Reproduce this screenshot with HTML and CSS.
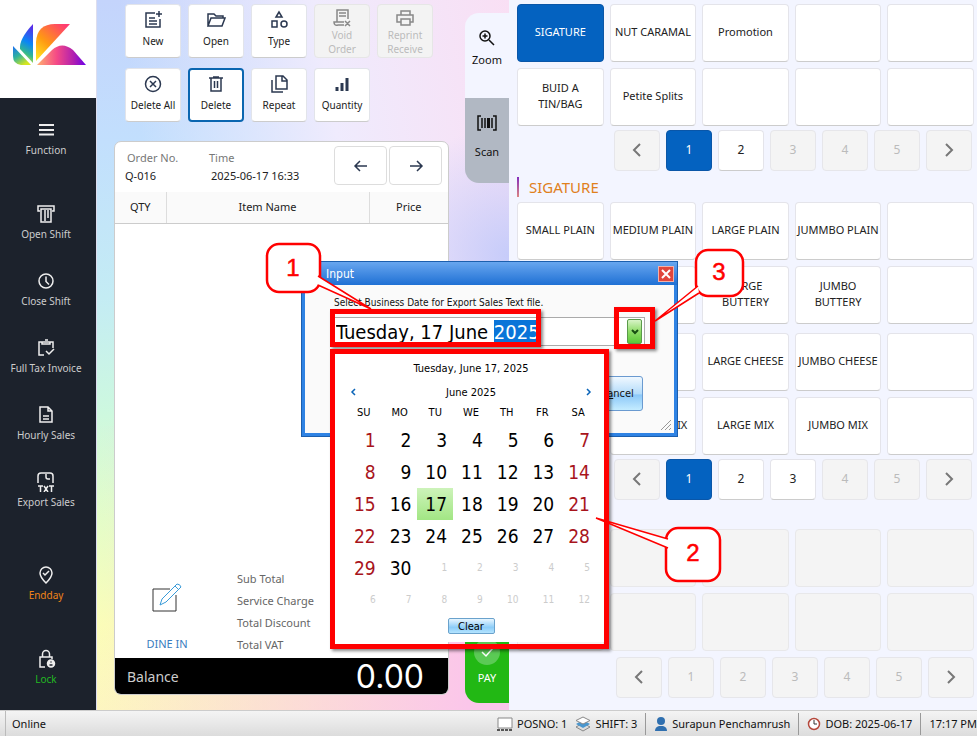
FILE: index.html
```html
<!DOCTYPE html>
<html lang="en">
<head>
<meta charset="utf-8">
<title>Point of Sale</title>
<link rel="stylesheet" href="styles.css">
</head>
<body>
<div class="app">
  <aside class="sidebar">
    <div class="logo">
      <svg width="74" height="44" viewBox="0 0 74 44" aria-label="Logo">
        <defs>
          <linearGradient id="g1" x1="0" y1="0" x2=".6" y2="1"><stop offset="0" stop-color="#1a6cf5"/><stop offset=".5" stop-color="#2fb39c"/><stop offset="1" stop-color="#d6e61e"/></linearGradient>
          <linearGradient id="g2" x1=".6" y1="0" x2=".4" y2="1"><stop offset="0" stop-color="#5a2be8"/><stop offset=".45" stop-color="#0a86f5"/><stop offset=".75" stop-color="#35b98c"/><stop offset="1" stop-color="#e8e81e"/></linearGradient>
          <linearGradient id="g3" x1="0" y1="1" x2=".8" y2="0"><stop offset="0" stop-color="#ffee22"/><stop offset=".45" stop-color="#ff9a12"/><stop offset="1" stop-color="#ff3d70"/></linearGradient>
          <linearGradient id="g4" x1="0" y1="0" x2="1" y2="0"><stop offset="0" stop-color="#ffb070"/><stop offset=".4" stop-color="#f54a86"/><stop offset=".75" stop-color="#b01fb0"/><stop offset="1" stop-color="#6a00e8"/></linearGradient>
        </defs>
        <path d="M0 23 18 42H8Q0 41 0 33Z" fill="url(#g1)"/>
        <path d="M20 1V40L7 26Q6 16 20 1Z" fill="url(#g2)"/>
        <path d="M57 1 23 38V19Q24 1 42 1Z" fill="url(#g3)"/>
        <path d="M24 42 39 27Q49 18 60 27L73 42Z" fill="url(#g4)"/>
      </svg>
    </div>
    <nav class="nav">
      <a href="#" class="nav-item"><svg class="icon" viewBox="0 0 20 20"><path d="M3 5h15M3 10h15M3 14.500h15" stroke-width="2"/></svg><span>Function</span></a>
      <a href="#" class="nav-item gap-m"><svg class="icon" viewBox="0 0 20 20"><path d="M4 7H2V2h16v5h-2M5 5h10v13H5zM9 6v11M12 6v8"/></svg><span>Open Shift</span></a>
      <a href="#" class="nav-item"><svg class="icon" viewBox="0 0 20 20"><circle cx="10" cy="10" r="7"/><path d="M10 5.500v5l3 3"/></svg><span>Close Shift</span></a>
      <a href="#" class="nav-item"><svg class="icon" viewBox="0 0 20 20"><path d="M8 17H3V4h14v6M6 4h8v2H6zM9 2h3M10 13l3 3 5-5"/></svg><span>Full Tax Invoice</span></a>
      <a href="#" class="nav-item"><svg class="icon" viewBox="0 0 20 20"><path d="M4 2h8l4 4v11H4zM12 2v4h4M7 11h6M7 14h6"/></svg><span>Hourly Sales</span></a>
      <a href="#" class="nav-item"><svg class="icon" viewBox="0 0 20 20"><path d="M2 11V4q0-3 3-3h9q3 0 3 3v7M10 2v3q0 2 2 2h2M2 14h5M4.500 14v6M8 14l4 6M12 14l-4 6M13 14h5M15.500 14v6"/></svg><span>Export Sales</span></a>
      <a href="#" class="nav-item gap-l endday"><svg class="icon" viewBox="0 0 20 20"><path d="M10 18Q4 12 4 8a6 6 0 0 1 12 0q0 4-6 10ZM7 8l2 2 4-4"/></svg><span>Endday</span></a>
      <a href="#" class="nav-item gap-m lock"><svg class="icon" viewBox="0 0 20 20"><path d="M9 18H4V8h12v2M6.500 8V5a3.500 3.500 0 0 1 7 0v3"/><circle cx="15" cy="14.500" r="3.500" fill="#eee"/><path d="M14.500 13h1M13.500 16h3" stroke="#1c222c"/></svg><span>Lock</span></a>
    </nav>
  </aside>

  <main class="order">
    <div class="work">
      <div class="tools">
        <button class="tool"><svg class="icon" viewBox="0 0 20 20"><path d="M12 3H3v14h14V9M6 8h6M6 11h8M6 14h8M16 1v6M13 4h6"/></svg><span>New</span></button>
        <button class="tool"><svg class="icon" viewBox="0 0 20 20"><path d="M2 16V4h6l2 2h7v2M2 16l3-8h14l-3 8z"/></svg><span>Open</span></button>
        <button class="tool"><svg class="icon" viewBox="0 0 20 20"><path d="M10 2 7 7h6zM3 11h5v6H3z"/><circle cx="15" cy="14" r="3"/></svg><span>Type</span></button>
        <button class="tool" disabled><svg class="icon" viewBox="0 0 20 20"><path d="M5 14V2h11v9M7 5h7M7 8h7M12 14H2q0 4 4 3h6M13 13l5 5M18 13l-5 5"/></svg><span>Void<br>Order</span></button>
        <button class="tool" disabled><svg class="icon" viewBox="0 0 20 20"><path d="M6 7V3h9v4M6 14H2V7h16v7h-3M6 11h9v6H6z"/></svg><span>Reprint<br>Receive</span></button>
        <button class="tool"><svg class="icon" viewBox="0 0 20 20"><circle cx="10" cy="10" r="7.500"/><path d="m7 7 6 6M13 7l-6 6"/></svg><span>Delete All</span></button>
        <button class="tool selected"><svg class="icon" viewBox="0 0 20 20"><path d="M3 4h14M7 3h6M5 4v13h10V4M8.500 7v7M11.500 7v7"/></svg><span>Delete</span></button>
        <button class="tool"><svg class="icon" viewBox="0 0 20 20"><path d="M7 2h7l4 4v9H7zM13 2v5h5M3 6v12h11"/></svg><span>Repeat</span></button>
        <button class="tool"><svg class="icon bars" viewBox="0 0 20 20"><path d="M5 13v4M10 9v8M15 4v13"/></svg><span>Quantity</span></button>
      </div>

      <section class="ticket">
        <header class="ticket-head">
          <dl class="meta"><dt>Order No.</dt><dd>Q-016</dd></dl>
          <dl class="meta time"><dt>Time</dt><dd>2025-06-17 16:33</dd></dl>
          <button class="arrow" aria-label="Previous order"><svg class="icon" viewBox="0 0 20 20"><path d="M16 10H4M9 5l-5 5 5 5"/></svg></button>
          <button class="arrow" aria-label="Next order"><svg class="icon" viewBox="0 0 20 20"><path d="M4 10h12M11 5l5 5-5 5"/></svg></button>
        </header>
        <table class="lines"><thead><tr><th class="qty">QTY</th><th>Item Name</th><th class="price">Price</th></tr></thead></table>
        <div class="summary">
          <a href="#" class="dine">
            <svg width="30" height="30" viewBox="0 0 30 30" fill="none"><path d="M18 6H1v22h23V12" stroke="#333"/><path d="m8 22 2-6L25 1q3 0 4 3L14 19zM23 3l4 4" stroke="#3a9bd8"/></svg>
            <span>DINE IN</span>
          </a>
          <ul class="totals"><li>Sub Total</li><li>Service Charge</li><li>Total Discount</li><li>Total VAT</li></ul>
        </div>
        <footer class="balance"><span>Balance</span><strong>0.00</strong></footer>
      </section>
    </div>

    <div class="side-tabs">
      <button class="tab zoom"><svg class="icon" viewBox="0 0 20 20"><circle cx="8" cy="8" r="5"/><path d="m12 12 5 5M5.500 8h5M8 5.500v5"/></svg><span>Zoom</span></button>
      <button class="tab scan"><svg class="icon" viewBox="0 0 20 20"><path d="M4 3H1v14h3M16 3h3v14h-3M5 5v10M8 5v10M15 5v10"/><path d="M11.500 5v10" stroke-width="3"/></svg><span>Scan</span></button>
      <button class="tab pay"><svg width="27" height="27" viewBox="0 0 27 27"><circle cx="13" cy="13" r="13" fill="#5bca55"/><path d="m8 13 4 4 7-8" stroke="#fff" fill="none" stroke-width="1.500"/></svg><span>PAY</span></button>
    </div>
  </main>

  <section class="catalog">
    <div class="tiles">
      <button class="tile active">SIGATURE</button><button class="tile">NUT CARAMAL</button><button class="tile">Promotion</button><button class="tile"></button><button class="tile"></button>
      <button class="tile">BUID A<br>TIN/BAG</button><button class="tile">Petite Splits</button><button class="tile"></button><button class="tile"></button><button class="tile"></button>
    </div>
    <div class="pager">
      <button disabled aria-label="Previous"><svg class="icon" viewBox="0 0 20 20"><path d="m13 4-6 6 6 6"/></svg></button><button class="active">1</button><button>2</button><button disabled>3</button><button disabled>4</button><button disabled>5</button><button disabled aria-label="Next"><svg class="icon" viewBox="0 0 20 20"><path d="m7 4 6 6-6 6"/></svg></button>
    </div>
    <h2 class="group-title">SIGATURE</h2>
    <div class="tiles">
      <button class="tile">SMALL PLAIN</button><button class="tile">MEDIUM PLAIN</button><button class="tile">LARGE PLAIN</button><button class="tile">JUMMBO PLAIN</button><button class="tile"></button>
      <button class="tile"></button><button class="tile"></button><button class="tile">LARGE<br>BUTTERY</button><button class="tile">JUMBO<br>BUTTERY</button><button class="tile"></button>
    </div>
    <div class="tiles second">
      <button class="tile"></button><button class="tile"></button><button class="tile">LARGE CHEESE</button><button class="tile">JUMBO CHEESE</button><button class="tile"></button>
      <button class="tile"></button><button class="tile">MEDIUM MIX</button><button class="tile">LARGE MIX</button><button class="tile">JUMBO MIX</button><button class="tile"></button>
    </div>
    <div class="pager">
      <button disabled aria-label="Previous"><svg class="icon" viewBox="0 0 20 20"><path d="m13 4-6 6 6 6"/></svg></button><button class="active">1</button><button>2</button><button>3</button><button disabled>4</button><button disabled>5</button><button disabled aria-label="Next"><svg class="icon" viewBox="0 0 20 20"><path d="m7 4 6 6-6 6"/></svg></button>
    </div>
    <div class="tiles third">
      <button class="tile" disabled></button><button class="tile" disabled></button><button class="tile" disabled></button><button class="tile" disabled></button><button class="tile" disabled></button>
      <button class="tile" disabled></button><button class="tile" disabled></button><button class="tile" disabled></button><button class="tile" disabled></button><button class="tile" disabled></button>
    </div>
    <div class="pager last">
      <button disabled aria-label="Previous"><svg class="icon" viewBox="0 0 20 20"><path d="m13 4-6 6 6 6"/></svg></button><button disabled>1</button><button disabled>2</button><button disabled>3</button><button disabled>4</button><button disabled>5</button><button disabled aria-label="Next"><svg class="icon" viewBox="0 0 20 20"><path d="m7 4 6 6-6 6"/></svg></button>
    </div>
  </section>
</div>

<footer class="status">
  <span class="grip"></span>
  <span class="online">Online</span>
  <span class="cell"><svg width="16" height="16" viewBox="0 0 16 16"><path d="M1 2h14v10H1z" fill="#fff" stroke="#888"/><path d="M0 14h16" stroke="#555" stroke-width="2" stroke-dasharray="3 1"/></svg>POSNO: 1</span>
  <span class="cell"><svg width="16" height="16" viewBox="0 0 16 16"><path d="m8 7 7 4-7 4-7-4z" fill="#ddd" stroke="#888"/><path d="m8 4 7 4-7 4-7-4z" fill="#4a97cf"/><path d="m8 1 7 3.500L8 8 1 4.500z" fill="#fff" stroke="#888"/></svg>SHIFT: 3</span>
  <span class="cell ruled"><svg width="14" height="14" viewBox="0 0 14 14" fill="#2f6faf"><circle cx="7" cy="4" r="4"/><path d="M1 14q0-4 4-5h4q4 1 4 5z"/></svg>Surapun Penchamrush</span>
  <span class="cell ruled"><svg width="14" height="14" viewBox="0 0 14 14" fill="#fff"><circle cx="7" cy="7" r="5.500" stroke="#b5483c" stroke-width="1.500"/><path d="M7 3v4h3" stroke="#333" fill="none"/></svg>DOB: 2025-06-17</span>
  <span class="cell ruled clock">17:17 PM</span>
</footer>

<div class="dialog" role="dialog" aria-labelledby="dialog-title">
  <div class="dialog-title"><span id="dialog-title">Input</span><button class="close" aria-label="Close"><svg width="10" height="10" viewBox="0 0 10 10"><path d="m1 1 8 8M9 1 1 9" stroke="#fff" stroke-width="2"/></svg></button></div>
  <div class="dialog-body">
    <label for="date">Select Business Date for Export Sales Text file.</label>
    <div class="field">
      <input id="date" type="text" value="Tuesday, 17 June 2025" spellcheck="false" autocomplete="off">
      <button class="drop" aria-label="Open calendar"><svg width="8" height="8" viewBox="0 0 8 8"><path d="m1 2 3 3 3-3" fill="none" stroke="#174d12" stroke-width="2"/></svg></button>
    </div>
    <button class="cancel">C<u>a</u>ncel</button>
    <svg class="resize" width="12" height="12" viewBox="0 0 12 12"><path d="M1 11 11 1M5 11l6-6M9 11l2-2" stroke="#999"/></svg>
  </div>
  <div class="calendar">
    <p class="today">Tuesday, June 17, 2025</p>
    <div class="month"><button aria-label="Previous month"><svg width="6" height="8" viewBox="0 0 6 8"><path d="M5 1 2 4l3 3"/></svg></button><span>June 2025</span><button aria-label="Next month"><svg width="6" height="8" viewBox="0 0 6 8"><path d="m1 1 3 3-3 3"/></svg></button></div>
    <table>
      <thead><tr><th>SU</th><th>MO</th><th>TU</th><th>WE</th><th>TH</th><th>FR</th><th>SA</th></tr></thead>
      <tbody>
        <tr><td>1</td><td>2</td><td>3</td><td>4</td><td>5</td><td>6</td><td>7</td></tr>
        <tr><td>8</td><td>9</td><td>10</td><td>11</td><td>12</td><td>13</td><td>14</td></tr>
        <tr><td>15</td><td>16</td><td class="picked">17</td><td>18</td><td>19</td><td>20</td><td>21</td></tr>
        <tr><td>22</td><td>23</td><td>24</td><td>25</td><td>26</td><td>27</td><td>28</td></tr>
        <tr><td>29</td><td>30</td><td class="out">1</td><td class="out">2</td><td class="out">3</td><td class="out">4</td><td class="out">5</td></tr>
        <tr><td class="out">6</td><td class="out">7</td><td class="out">8</td><td class="out">9</td><td class="out">10</td><td class="out">11</td><td class="out">12</td></tr>
      </tbody>
    </table>
    <button class="clear">Clear</button>
  </div>
</div>

<div class="mark mark-date"></div>
<div class="mark mark-calendar"></div>
<div class="mark mark-drop"></div>
<svg class="callouts" width="977" height="736" viewBox="0 0 977 736">
  <rect x="267" y="244" width="53" height="48" rx="12"/>
  <rect x="666" y="528" width="54" height="53" rx="12"/>
  <rect x="696" y="250" width="47" height="46" rx="12"/>
  <path class="tail" d="M318 276 371 309 318 285"/>
  <path class="tail" d="M668 539 596 518 668 548"/>
  <path class="tail" d="M698 286 655 321 699 293"/>
  <text x="293" y="276">1</text>
  <text x="693" y="561">2</text>
  <text x="719" y="280">3</text>
</svg>
<script src="app.js"></script>
</body>
</html>
```
FILE: styles.css
```css
* { box-sizing: border-box; }
body {
  margin: 0;
  min-height: 100vh;
  display: flex;
  flex-direction: column;
  position: relative;
  font: 11px/16px "Noto Sans", sans-serif;
  color: #222;
}
button { font: inherit; color: inherit; padding: 0; margin: 0; border: 0; background: none; }
a { text-decoration: none; color: inherit; }
.icon { width: 20px; height: 20px; fill: none; stroke: currentColor; stroke-width: 1.5; flex: none; }

.app { flex: 1; display: flex; }

/* Sidebar */
.sidebar { width: 97px; flex: none; background: #1c222c; border-right: 1px solid #dde; }
.logo { height: 98px; background: #fff; padding: 23px 0 0 13px; }
.nav { display: flex; flex-direction: column; gap: 29px; padding: 22px 4px 20px 0; color: #ccc; }
.nav-item { display: flex; flex-direction: column; align-items: center; gap: 2px; font-size: 10px; white-space: nowrap; }
.nav-item .icon { stroke: #eee; }
.gap-m { margin-top: 17px; }
.gap-l { margin-top: 26px; }
.endday { color: #f08418; }
.lock { color: #22b822; }

/* Order area */
.order {
  width: 412px;
  flex: none;
  display: flex;
  background:
    radial-gradient(circle at 100% 36%, #c6ccfa 0, #c6ccfa00 130px),
    linear-gradient(90deg, #fbfdb800 0, #fbc6ea 90%) 0 100% / 100% 40% no-repeat,
    linear-gradient(80deg, #fff0 20%, #efebfd 60%, #f9dff4 100%) 0 0 / 100% 62% no-repeat,
    linear-gradient(#c4d4fc 0, #c2dffd 20%, #c4ecf4 42%, #cdf8df 58%, #e4fdc8 73%, #fbfdb8 88%, #fdf6c0 100%);
}
.work { flex: 1; padding: 4px 16px 15px 17px; display: flex; flex-direction: column; }
.tools { display: grid; grid-template-columns: repeat(5, 56px); grid-auto-rows: 54px; gap: 10px 7px; padding-left: 11px; }
.tool {
  display: flex; flex-direction: column; align-items: center; gap: 4px;
  padding-top: 5px; font-size: 10px; line-height: 14px; white-space: nowrap;
  background: #fff; border: 1px solid #e2e4ea; border-bottom-color: #ccc; border-radius: 4px; color: #2b3850;
}
.tool span { color: #222; }
.tool:disabled { background: #f3f3f3; color: #888; border-color: #e6e6e6; gap: 0; padding-top: 3px; }
.tool:disabled span { color: #bbb; }
.tool.selected { border: 2px solid #0a66b0; padding-top: 4px; }
.bars { stroke-width: 3; }

.ticket { flex: 1; margin-top: 19px; display: flex; flex-direction: column; background: #fff; border: 1px solid #ccc; border-radius: 7px; overflow: hidden; }
.ticket-head { display: flex; align-items: flex-start; gap: 2px; padding: 4px 6px 7px 10px; }
.meta { margin: 4px 0 0; width: 80px; }
.meta.time { flex: 1; width: auto; }
.meta dt { color: #777; padding-left: 2px; }
.meta dd { margin: 2px 0 0; }
.meta.time dd { padding-left: 4px; }
.arrow { width: 53px; height: 39px; border: 1px solid #ddd; border-radius: 4px; display: grid; place-items: center; color: #2b3850; }
.lines { width: 100%; border-collapse: collapse; table-layout: fixed; }
.lines th { height: 31px; padding: 0; font-weight: 400; background: #fafafa; border-bottom: 1px solid #ccc; border-right: 1px solid #ddd; }
.lines th:last-child { border-right: 0; }
.lines .qty { width: 51px; }
.lines .price { width: 79px; }
.summary { margin-top: auto; display: flex; color: #666; }
.dine { width: 122px; padding: 15px 18px 0 0; display: flex; flex-direction: column; align-items: center; justify-content: space-between; color: #3a7cc0; }
.dine span { line-height: 28px; }
.totals { margin: 0; padding: 0; list-style: none; line-height: 22px; }
.totals li:last-child { padding-bottom: 2px; }
.balance { height: 36px; display: flex; align-items: center; justify-content: space-between; padding: 2px 24px 0 12px; background: #000; color: #ccc; font-size: 14px; }
.balance strong { font: 400 32px/34px Inter, sans-serif; color: #fff; }

.side-tabs { width: 44px; display: flex; flex-direction: column; padding: 13px 0 7px; color: #111; }
.tab { height: 85px; display: flex; flex-direction: column; align-items: center; }
.zoom { background: #f3f5ff; border-radius: 14px 0 0 0; padding-top: 15px; gap: 4px; }
.scan { background: #b1b8c3; border-radius: 0 0 0 14px; padding-top: 15px; gap: 11px; }
.pay { margin-top: auto; background: #22b814; color: #fff; border-radius: 14px 0 0 14px; padding-top: 21px; gap: 4px; }

/* Catalogue */
.catalog { flex: 1; min-width: 0; background: #f3f5ff; padding: 4px 3px 12px 8px; }
.tiles { display: grid; grid-template-columns: repeat(5, minmax(0, 1fr)); grid-auto-rows: 58px; gap: 6px; }
.second { margin-top: 9px; }
.third { margin-top: 29px; }
.tile { padding-bottom: 2px; background: #fff; border: 1px solid #e4e4ea; border-bottom-color: #ccc; border-radius: 4px; white-space: nowrap; }
.tile:disabled { background: #f4f4f4; border-color: #e8e8ea; }
.tile.active, .pager .active { background: #0462c0; color: #fff; border-color: #0a56a8; }
.pager { display: flex; justify-content: flex-end; gap: 6px; margin: 4px 2px 0 0; font-size: 12px; }
.pager button { width: 46px; height: 41px; padding-bottom: 2px; display: grid; place-items: center; background: #fff; border: 1px solid #e4e4ea; border-bottom-color: #ccc; border-radius: 4px; }
.pager button:disabled { background: #f4f4f4; border-color: #e6e6ea; color: #bbb; }
.pager .icon { color: #777; stroke-width: 2; }
.last { margin: 6px 0 0; }
.group-title { margin: 6px 0 5px; padding-left: 10px; border-left: 2px solid; border-image: linear-gradient(#8028c0, #e08a80) 1; font-size: 15px; line-height: 20px; font-weight: 400; color: #e0801c; }

/* Status bar */
.status { height: 26px; display: flex; align-items: center; overflow: hidden; border-top: 1px solid #ccc; background: linear-gradient(#f4f4f4, #dcdcdc); white-space: nowrap; color: #111; }
.grip { width: 6px; height: 100%; border-right: 1px solid #bbb; }
.online { flex: 1; padding-left: 6px; }
.cell { display: flex; align-items: center; gap: 4px; padding-right: 8px; flex: none; height: 22px; }
.ruled { border-left: 1px solid #999; padding: 0 8px; }
.clock { padding-right: 0; }

/* Date dialog */
.dialog { position: absolute; left: 301px; top: 261px; width: 377px; border: 1px solid #1c5fae; background: #2f83e4; padding: 0 3px 3px; font: 10px/16px "DejaVu Sans Condensed", "DejaVu Sans", sans-serif; }
.dialog-title { height: 23px; margin: 0 -3px; padding: 0 3px 0 24px; display: flex; align-items: center; justify-content: space-between; background: linear-gradient(#68a6ef, #1f70d4); color: #fff; font-size: 12px; }
.close { width: 16px; height: 16px; display: grid; place-items: center; background: #e0463c; border: 1px solid #f3b0a8; }
.dialog-body { height: 148px; background: #fafafa; padding: 8px 29px 0; position: relative; color: #111; }
.dialog-body label { display: block; line-height: 20px; }
.field { height: 29px; margin-top: 4px; display: flex; align-items: center; background: #fff; border: 1px solid #aaa; padding-right: 2px; }
.field input { flex: 1; min-width: 0; height: 26px; border: 0; outline: 0; padding: 0 0 0 1px; background: transparent; font: 20px "DejaVu Sans Condensed", "DejaVu Sans", sans-serif; color: #000; }
.field input::selection { background: #0a74d8; color: #fff; }
.drop { width: 15px; height: 25px; border: 1px solid #5a9a4a; border-radius: 2px; background: linear-gradient(#d8f4c8, #8fdc68 50%, #5cc838); display: grid; place-items: center; }
.cancel { display: block; width: 52px; height: 35px; margin: 30px 2px 0 auto; border: 1px solid #6a9ad0; border-radius: 3px; background: linear-gradient(#f0f8ff, #b4dcfa 50%, #8cc8f8 55%, #c4ecff); font-size: 11px; }
.resize { position: absolute; right: 2px; bottom: 2px; }

.calendar { position: absolute; left: 33px; top: 91px; width: 272px; padding: 8px 10px; background: #fff; color: #000; font-size: 11px; }
.calendar p { margin: 0; text-align: center; }
.month { display: flex; justify-content: space-between; align-items: center; height: 24px; margin-top: 4px; padding: 0 5px; }
.month svg { fill: none; stroke: #0a64b8; stroke-width: 1.5; }
.calendar table { width: 250px; margin: 0 auto; border-collapse: collapse; table-layout: fixed; }
.calendar th { height: 19px; padding: 0; font-weight: 400; line-height: 16px; vertical-align: top; }
.calendar td { height: 32px; padding: 0 6px 0 0; text-align: right; font-size: 19px; line-height: 30px; }
.calendar td:first-child, .calendar td:last-child { color: #a8141c; }
.calendar td.out, .calendar td.out:first-child, .calendar td.out:last-child { font-size: 10px; color: #ccc; }
.calendar td.picked { background: linear-gradient(#cdf3ba, #a2e684); }
.clear { display: block; width: 47px; height: 16px; margin: 2px auto 0; line-height: 13px; border: 1px solid #6aa2cc; border-radius: 2px; background: linear-gradient(#e8f6ff, #8ccdf8 60%, #b4e4ff); }

/* Annotations */
.mark { position: absolute; border: 5px solid #f00; box-shadow: 2px 2px 3px #0007; pointer-events: none; }
.mark-date { left: 330px; top: 309px; width: 211px; height: 38px; }
.mark-calendar { left: 330px; top: 349px; width: 279px; height: 300px; }
.mark-drop { left: 614px; top: 307px; width: 41px; height: 42px; }
.callouts { position: absolute; left: 0; top: 0; pointer-events: none; }
.callouts rect { fill: #fff; stroke: #f00; stroke-width: 2.5; }
.callouts .tail { fill: #fff; stroke: #f00; stroke-width: 1.5; }
.callouts text { fill: #f00; stroke: #f00; stroke-width: 0.5; font: 24px "Liberation Sans", sans-serif; text-anchor: middle; }
```
FILE: app.js
```js
// Opens the dialog with the year part of the date selected.
const date = document.getElementById('date');
date.focus({ preventScroll: true });
date.setSelectionRange(date.value.length - 4, date.value.length);
```
